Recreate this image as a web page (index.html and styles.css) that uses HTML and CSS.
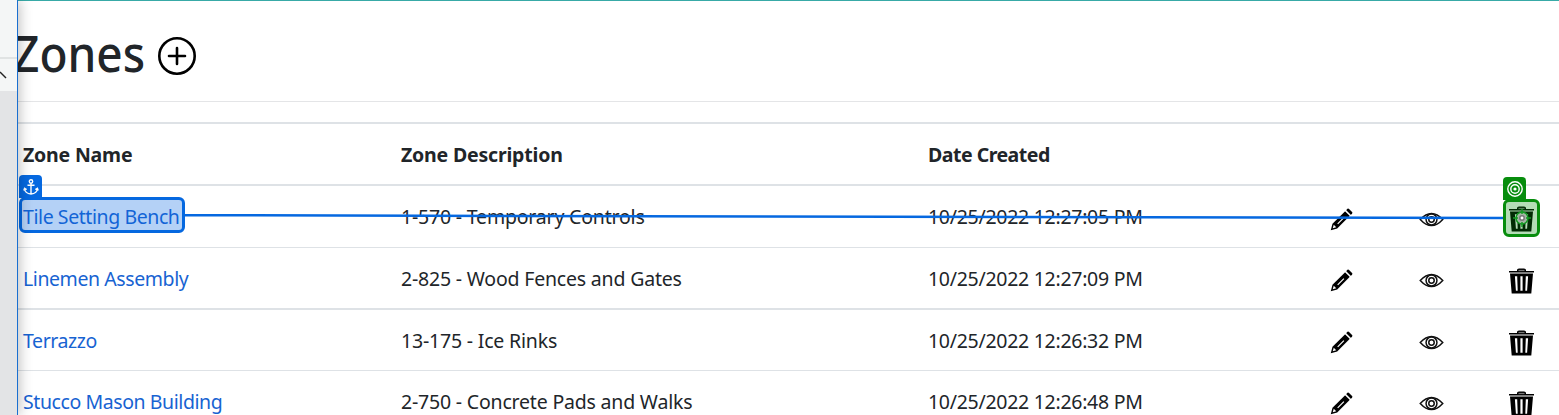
FILE: index.html
```
<!DOCTYPE html>
<html lang="en">
<head>
<meta charset="utf-8">
<title>Zones</title>
<link rel="stylesheet" href="styles.css">
</head>
<body>
<svg class="symbols" aria-hidden="true">
  <symbol id="pencil" viewBox="0 0 24 24">
    <path d="M.8 23.200 2.600 16.500 15.800 3.300 20.700 8.200 7.500 21.400Z"/>
    <path d="M16.800 2.300 18.200 .9Q19 .2 19.900 1L23 4.100Q23.800 5 23.100 5.800L21.700 7.200Z"/>
    <path class="cut" d="M3.900 17.500 6.500 20.100 2.900 21.100Z"/>
    <path class="cut-line" d="M8 16.500 14.500 10M16.300 2.800 21.200 7.700"/>
  </symbol>
  <symbol id="eye" viewBox="0 0 26 16">
    <g class="stroke"><path d="M1 8Q7 1.500 13 1.500T25 8Q19 14.500 13 14.500T1 8Z"/><circle cx="13" cy="8" r="5.800"/><circle cx="13" cy="8" r="2.900"/></g>
  </symbol>
  <symbol id="trash" viewBox="0 0 25 26">
    <path d="M0 3H8V2Q8 .5 10 .5H15Q17 .5 17 2V3H25V4.600H0Z"/>
    <path class="lid" d="M9.500 2.500H15.500"/>
    <path fill-rule="evenodd" d="M1 5.600H24L22.300 25.500H2.700ZM5.900 8.300 6.900 22.800H8.700L8.200 8.300ZM11.400 8.300V22.800H13.600V8.300ZM16.800 8.300 16.300 22.800H18.100L19.100 8.300Z"/>
  </symbol>
</svg>
<div class="app">
  <aside class="panel">
    <div class="panel-top"></div>
    <div class="panel-tool"><svg viewBox="0 0 17 32"><path d="M0 13 6 19"/></svg></div>
  </aside>
  <main class="page">
    <header class="heading">
      <h1>Zones</h1>
      <svg class="add" viewBox="0 0 38 38"><circle cx="19" cy="19" r="17.700"/><path d="M19 11V27M11 19H27"/></svg>
    </header>
    <section class="table">
      <div class="row head"><span>Zone Name</span><span>Zone Description</span><span class="date">Date Created</span></div>
      <div class="row first"><a>Tile Setting Bench</a><span>1-570 - Temporary Controls</span><span class="date">10/25/2022 12:27:05 PM</span><svg class="pencil"><use href="#pencil"/></svg><svg class="eye"><use href="#eye"/></svg><svg class="trash"><use href="#trash"/></svg></div>
      <div class="row thick"><a>Linemen Assembly</a><span>2-825 - Wood Fences and Gates</span><span class="date">10/25/2022 12:27:09 PM</span><svg class="pencil"><use href="#pencil"/></svg><svg class="eye"><use href="#eye"/></svg><svg class="trash"><use href="#trash"/></svg></div>
      <div class="row"><a>Terrazzo</a><span>13-175 - Ice Rinks</span><span class="date">10/25/2022 12:26:32 PM</span><svg class="pencil"><use href="#pencil"/></svg><svg class="eye"><use href="#eye"/></svg><svg class="trash"><use href="#trash"/></svg></div>
      <div class="row"><a>Stucco Mason Building</a><span>2-750 - Concrete Pads and Walks</span><span class="date">10/25/2022 12:26:48 PM</span><svg class="pencil"><use href="#pencil"/></svg><svg class="eye"><use href="#eye"/></svg><svg class="trash"><use href="#trash"/></svg></div>
    </section>
  </main>
</div>
<svg class="connector" viewBox="0 0 1559 415"><path d="M184 215.200 1504 218"/></svg>
<div class="anchor-tab"><svg viewBox="0 0 16 16"><circle cx="8" cy="2.500" r="1.700"/><path d="M8 4.200V15M4.500 6.200H11.500M1.500 9.500Q2 14.500 8 15Q14 14.500 14.500 9.500M.8 11.500 1.600 9.300 3.700 10.500M15.200 11.500 14.400 9.300 12.300 10.500"/></svg></div>
<div class="anchor-box"></div>
<div class="target-tab"><svg viewBox="0 0 16 16"><circle cx="8" cy="8" r="7.200"/><circle cx="8" cy="8" r="4.200"/><circle class="dot" cx="8" cy="8" r="1.600"/></svg></div>
<div class="target-box"><svg viewBox="0 0 18 18"><circle cx="9" cy="9" r="6"/><path d="M9 0V5M9 13V18M0 9H5M13 9H18"/><circle class="core" cx="9" cy="9" r="2.200"/></svg></div>
</body>
</html>
```
FILE: styles.css
```
* { box-sizing: border-box; }
body { margin: 0; height: 415px; overflow: hidden; position: relative; background: #fff; color: #212529; font: 400 19.5px/30px "Noto Sans", "Open Sans", sans-serif; letter-spacing: -.19px; }
svg { display: block; }
.symbols { position: absolute; width: 0; height: 0; }
.app { display: flex; height: 415px; }
.panel { position: relative; z-index: 1; flex: 0 0 18px; background: #e3e4e6; border-right: 1px solid #1a6fd0; box-shadow: 1px 0 14px rgba(0,0,0,.28); }
.panel-top { height: 59px; background: #f4f6f6; border-bottom: 2px solid #e0e3e3; }
.panel-tool { height: 32px; background: #f4f6f6; }
.panel-tool svg { width: 17px; height: 32px; fill: none; stroke: #222; stroke-width: 1.5; }
.page { flex: 1; min-width: 0; border-top: 1px solid #38aaa7; }
.heading { display: flex; align-items: center; gap: 15px; height: 101px; margin-bottom: 20px; border-bottom: 1px solid #e4e5e7; }
h1 { margin: 0 0 0 -5px; width: 130px; font-size: 50px; line-height: 60px; font-weight: 500; letter-spacing: 0; white-space: nowrap; transform: translateY(2px) scaleX(.92); transform-origin: left; }
.add { width: 38px; height: 38px; margin-top: 10px; fill: none; stroke: #000; stroke-width: 2.6; stroke-linecap: round; }
.table { border-top: 2px solid #dee2e6; }
.row { display: grid; grid-template-columns: 378px 527px 402px 89px 90px 50px; align-items: center; height: 61px; padding: 1px 0 0 5px; border-bottom: 1px solid #dee2e6; white-space: nowrap; }
.row.head { height: 62px; border-bottom-width: 2px; font-weight: 700; }
.row.first { height: 62px; }
.row.thick { height: 62px; border-bottom-width: 2px; }
.row a { color: #1763d2; letter-spacing: -.42px; }
.date { letter-spacing: -.28px; }
.head .date { letter-spacing: -.5px; }
.pencil { width: 23px; height: 23px; margin-top: 4px; }
.eye { width: 25px; height: 15px; margin-top: 4px; }
.trash { width: 25px; height: 26px; margin-top: 4px; }
.cut { fill: #fff; }
.cut-line { fill: none; stroke: #fff; stroke-width: 1.2; }
.lid { fill: none; stroke: #777; stroke-width: 1.2; }
.stroke { fill: none; stroke: #111; stroke-width: 1.6; }
.connector { position: absolute; inset: 0; width: 1559px; height: 415px; fill: none; stroke: #0568e0; stroke-width: 2.5; }
.anchor-tab, .target-tab { position: absolute; display: flex; align-items: center; justify-content: center; width: 23px; height: 23px; border-radius: 4px 4px 0 0; background: #0568e0; left: 19px; top: 175px; }
.anchor-tab svg, .target-tab svg { width: 16px; height: 16px; fill: none; stroke: #fff; stroke-width: 1.4; }
.anchor-box { position: absolute; left: 19px; top: 197px; width: 166px; height: 36px; border: 3px solid #0568e0; border-radius: 6px; background: rgba(5,104,224,.3); }
.target-tab { left: 1503px; top: 177px; background: #078d0d; }
.target-tab .dot { fill: #fff; stroke: none; }
.target-box { position: absolute; display: flex; align-items: center; justify-content: center; left: 1503px; top: 199px; width: 37px; height: 38px; border: 3px solid #078d0d; border-radius: 6px; background: rgba(7,141,13,.3); }
.target-box svg { width: 18px; height: 18px; fill: #a4b5a4; stroke: #149a23; stroke-width: 1.5; }
.target-box .core { fill: #fff; stroke: #777; }
```
